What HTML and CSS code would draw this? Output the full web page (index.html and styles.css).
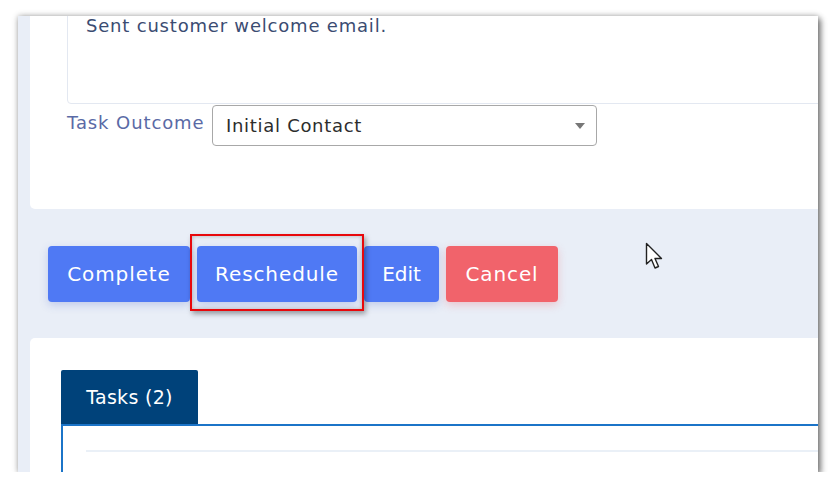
FILE: index.html
```html
<!DOCTYPE html>
<html lang="en">
<head>
    <meta charset="UTF-8">
    <title>Task Detail</title>
    <link rel="stylesheet" href="styles.css">
</head>
<body>
    <div class="shot">
        <div class="card top-card">
            <div class="note">Sent customer welcome email.</div>
            <div class="outcome">
                <label class="outcome-label">Task Outcome</label>
                <div class="select">
                    <span>Initial Contact</span>
                    <span class="caret"></span>
                </div>
            </div>
        </div>

        <div class="actions">
            <button class="btn btn-blue">Complete</button>
            <button class="btn btn-blue highlight">Reschedule</button>
            <button class="btn btn-blue">Edit</button>
            <button class="btn btn-red">Cancel</button>
            <svg class="cursor" width="20" height="30" viewBox="0 0 20 30">
                <path d="M1.5 1.5 L1.5 22 L6.5 17.5 L10 26 L13.5 24.5 L10 16.5 L16.5 16.5 Z" fill="#fff" stroke="#222" stroke-width="1.4" stroke-linejoin="round"/>
            </svg>
        </div>

        <div class="card bottom-card">
            <div class="tabs">
                <div class="tab">Tasks (2)</div>
            </div>
            <div class="tab-panel">
                <div class="rule"></div>
            </div>
        </div>
    </div>
</body>
</html>
```

FILE: styles.css
```css
body { margin: 0; background: #fff; font-family: "DejaVu Sans", sans-serif; }
.shot { margin: 16px 0 0 18px; width: 800px; height: 456px; overflow: hidden; background: #e9eef7; box-shadow: 0 0 6px rgba(0,0,0,0.3), 3px 3px 6px rgba(0,0,0,0.45); position: relative; }
.card { background: #fff; margin-left: 12px; margin-right: -20px; }
.top-card { margin-top: -56px; padding: 16px 0 63px 37px; border-radius: 0 0 0 5px; }
.note { height: 87px; border: 1px solid #e3e8f1; border-radius: 4px; padding: 39px 0 0 18px; color: #3b4c72; font-size: 18px; line-height: 20px; letter-spacing: 0.8px; }
.outcome { display: flex; gap: 7px; margin-top: 1px; }
.outcome-label { color: #5a6aa6; font-size: 18px; line-height: 24px; padding-top: 6px; width: 138px; white-space: nowrap; letter-spacing: 0.9px; }
.select { width: 370px; height: 39px; border: 1px solid #a8a8a8; border-radius: 4px; padding-left: 13px; display: flex; align-items: center; justify-content: space-between; color: #2d2d2d; font-size: 18px; letter-spacing: 0.7px; }
.caret { width: 0; height: 0; border-left: 5px solid transparent; border-right: 5px solid transparent; border-top: 6px solid #777; margin-right: 11px; }
.actions { display: flex; gap: 7px; margin-top: 37px; padding-left: 30px; position: relative; }
.btn { height: 56px; border: none; border-radius: 4px; color: #fff; font-family: "DejaVu Sans", sans-serif; font-size: 20px; letter-spacing: 0.9px; padding: 0; box-shadow: 0 3px 8px rgba(70,100,200,0.25); }
.btn-blue { background: #4f79f4; }
.btn-red { background: #f1636b; width: 112px; box-shadow: 0 3px 8px rgba(240,100,110,0.3); }
.actions .btn:nth-child(1) { width: 142px; }
.actions .btn:nth-child(2) { width: 160px; }
.actions .btn:nth-child(3) { width: 75px; letter-spacing: 0; }
.highlight { position: relative; z-index: 2; }
.highlight::after { content: ""; position: absolute; top: -12px; bottom: -9px; left: -7px; right: -7px; border: 2px solid #e8080c; box-shadow: 2px 3px 5px rgba(0,0,0,0.35), inset 0 0 4px rgba(0,0,0,0.25); }
.cursor { position: absolute; left: 627px; top: -4px; }
.bottom-card { margin-top: 36px; height: 200px; padding-top: 32px; border-radius: 5px 0 0 0; }
.tabs { display: flex; padding-left: 31px; }
.tab { width: 137px; height: 54px; background: #00427a; color: #fff; font-size: 19px; letter-spacing: 0.3px; display: flex; align-items: center; justify-content: center; border-radius: 2px 2px 0 0; }
.tab-panel { margin-left: 31px; border-top: 2px solid #1b74c8; border-left: 2px solid #1b74c8; height: 100px; }
.rule { margin: 24px 0 0 23px; border-top: 2px solid #eaf0f7; }
```
